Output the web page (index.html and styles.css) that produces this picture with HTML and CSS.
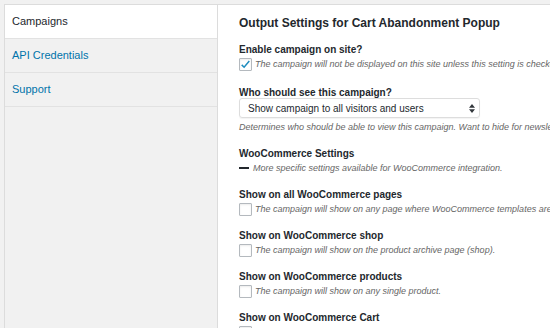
FILE: index.html
```html
<!DOCTYPE html>
<html lang="en">
<head>
    <meta charset="UTF-8">
    <meta name="viewport" content="width=device-width, initial-scale=1.0">
    <title>Campaign Output Settings</title>
    <link rel="stylesheet" href="styles.css">
</head>
<body>
    <div class="wrap">
        <nav class="tabs">
            <a class="tab active" href="#">Campaigns</a>
            <a class="tab" href="#">API Credentials</a>
            <a class="tab" href="#">Support</a>
        </nav>

        <div class="panel">
            <h2>Output Settings for Cart Abandonment Popup</h2>

            <div class="field field-first">
                <label class="field-label">Enable campaign on site?</label>
                <div class="check-row">
                    <span class="checkbox">
                        <svg viewBox="0 0 16 16" width="11" height="11"><path d="M2.5 8.5 L6 12 L13.5 3" fill="none" stroke="#1e8cbe" stroke-width="2.2"/></svg>
                    </span>
                    <span class="desc">The campaign will not be displayed on this site unless this setting is checked.</span>
                </div>
            </div>

            <div class="field field-select">
                <label class="field-label">Who should see this campaign?</label>
                <div class="select">
                    <span>Show campaign to all visitors and users</span>
                    <svg class="arrows" viewBox="0 0 8 12" width="6" height="9"><path d="M4 0 L8 5 H0 Z M4 12 L8 7 H0 Z" fill="#32373c"/></svg>
                </div>
                <p class="desc desc-below">Determines who should be able to view this campaign. Want to hide for newsletter subscribers?</p>
            </div>

            <div class="field field-section">
                <label class="field-label">WooCommerce Settings</label>
                <div class="check-row">
                    <span class="dash"></span>
                    <span class="desc">More specific settings available for WooCommerce integration.</span>
                </div>
            </div>

            <div class="field">
                <label class="field-label">Show on all WooCommerce pages</label>
                <div class="check-row">
                    <span class="checkbox"></span>
                    <span class="desc">The campaign will show on any page where WooCommerce templates are used.</span>
                </div>
            </div>

            <div class="field">
                <label class="field-label">Show on WooCommerce shop</label>
                <div class="check-row">
                    <span class="checkbox"></span>
                    <span class="desc">The campaign will show on the product archive page (shop).</span>
                </div>
            </div>

            <div class="field">
                <label class="field-label">Show on WooCommerce products</label>
                <div class="check-row">
                    <span class="checkbox"></span>
                    <span class="desc">The campaign will show on any single product.</span>
                </div>
            </div>

            <div class="field">
                <label class="field-label">Show on WooCommerce Cart</label>
                <div class="check-row">
                    <span class="checkbox"></span>
                    <span class="desc">The campaign will show on the cart page.</span>
                </div>
            </div>
        </div>
    </div>
</body>
</html>
```

FILE: styles.css
```css
:root {
    --text-color: #23282d;
    --link-color: #0073aa;
    --muted-color: #666;
    --border-color: #dcdcdc;
    --page-bg: #f1f1f1;
}

html, body {
    height: 100%;
}

body {
    margin: 0;
    background-color: var(--page-bg);
    font-family: 'Liberation Sans', Arial, sans-serif;
    color: var(--text-color);
    overflow: hidden;
}

.wrap {
    display: flex;
    margin: 4px 0 0 4px;
    height: calc(100% - 4px);
    border-top: 1px solid var(--border-color);
    border-left: 1px solid var(--border-color);
}

/* Sidebar tabs */
.tabs {
    display: flex;
    flex-direction: column;
    width: 212px;
    flex-shrink: 0;
    border-right: 1px solid var(--border-color);
    background-color: var(--page-bg);
}

.tab {
    display: block;
    height: 33px;
    line-height: 33px;
    padding-left: 7px;
    font-size: 11px;
    color: var(--link-color);
    text-decoration: none;
    border-bottom: 1px solid #e2e2e2;
}

.tab.active {
    background-color: #fff;
    color: var(--text-color);
}

/* Settings panel */
.panel {
    flex: 1;
    min-width: 0;
    background-color: #fff;
    padding: 10px 0 0 21px;
    overflow: hidden;
}

h2 {
    margin: 0 0 12px;
    font-size: 12px;
    line-height: 16px;
    font-weight: bold;
}

.field {
    margin-top: 13px;
}

.field-first {
    margin-top: 0;
}

.field-label {
    display: block;
    font-size: 10px;
    line-height: 14px;
    font-weight: bold;
}

.field-select {
    margin-top: 17px;
}

.field-select .field-label {
    line-height: 10px;
}

.check-row {
    display: flex;
    align-items: center;
    height: 14px;
    white-space: nowrap;
}

.desc {
    font-size: 9px;
    font-style: italic;
    color: var(--muted-color);
    white-space: nowrap;
}

.desc-below {
    margin: 2px 0 0;
    line-height: 14px;
}

.checkbox {
    display: flex;
    align-items: center;
    justify-content: center;
    width: 11px;
    height: 11px;
    margin-right: 3px;
    flex-shrink: 0;
    border: 1px solid #b4b9be;
    border-radius: 1px;
    box-shadow: inset 0 1px 2px rgba(0, 0, 0, 0.08);
    background-color: #fff;
}

.dash {
    width: 10px;
    height: 2px;
    margin-right: 4px;
    background-color: #23282d;
}

.select {
    display: flex;
    align-items: center;
    justify-content: space-between;
    box-sizing: border-box;
    width: 241px;
    height: 20px;
    padding: 0 4px 0 8px;
    border: 1px solid #ddd;
    border-radius: 3px;
    box-shadow: 0 1px 1px rgba(0, 0, 0, 0.05);
    font-size: 10px;
}
```
